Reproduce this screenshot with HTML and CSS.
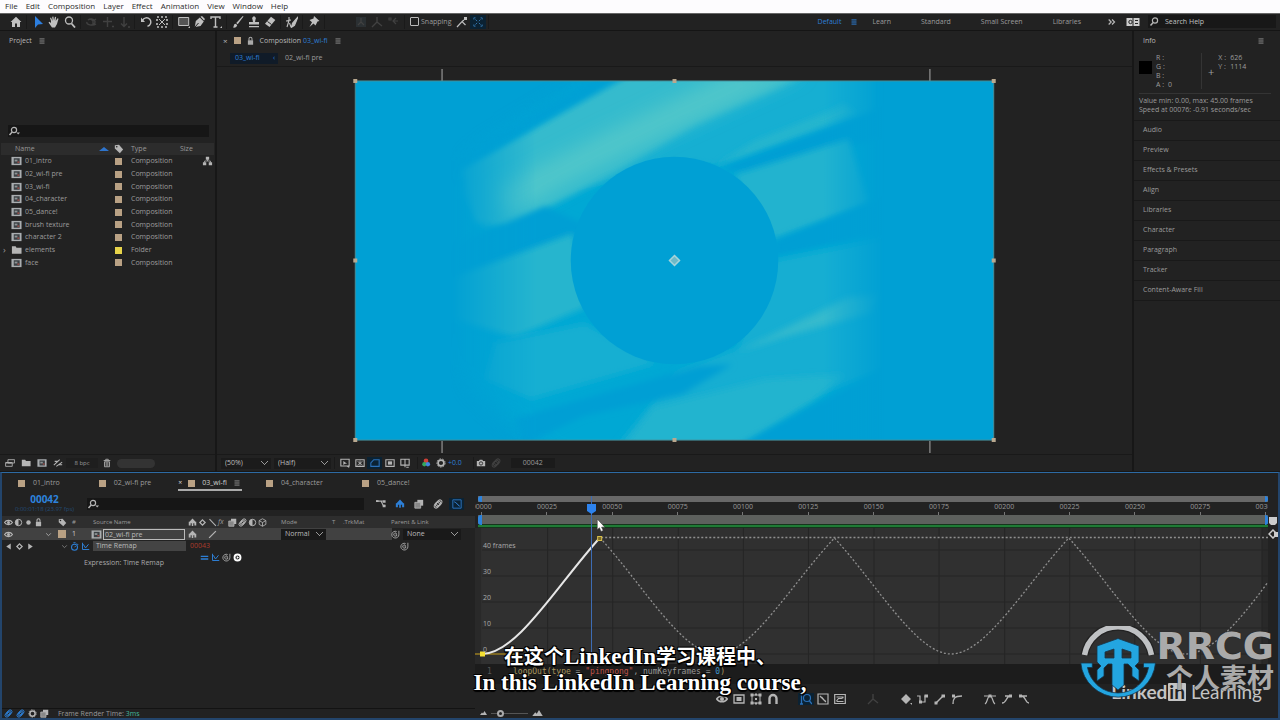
FILE: index.html
```html
<!DOCTYPE html>
<html lang="en">
<head>
<meta charset="utf-8">
<title>Composition 03_wi-fi</title>
<link rel="stylesheet" href="styles.css">
</head>
<body>
<svg class="defs" aria-hidden="true">
  <symbol id="menu" viewBox="0 0 12 12"><path d="M3 3.500h6M3 6h6M3 8.500h6" stroke="currentColor" stroke-width="1.200"/></symbol>
  <symbol id="home" viewBox="0 0 12 12"><path d="M6 .8 0.600 6H2v5h3V7.500h2V11h3V6h1.400z" fill="currentColor"/></symbol>
  <symbol id="arrow" viewBox="0 0 12 12"><path d="M3 0v12l3-3.500 5-.5z" fill="currentColor"/></symbol>
  <symbol id="hand" viewBox="0 0 12 12"><path d="M3 5 2 2l1-.4L4.500 5 4.200.8l1.200-.2L6 4.500 7 .8l1.100.3L7.700 5 9.500 2.200l1 .5L9 8l-2 3.500H4L.5 6.500l1-.8L3 7z" fill="currentColor"/></symbol>
  <symbol id="zoom" viewBox="0 0 12 12"><circle cx="5" cy="4.500" r="3.500" fill="none" stroke="currentColor" stroke-width="1.300"/><path d="m7.500 7.500 3.500 4" stroke="currentColor" stroke-width="1.800"/></symbol>
  <symbol id="orbit" viewBox="0 0 12 12"><path d="M2 4a4 3 0 1 1 3 5M1 6a5 2.500 0 0 0 9 2M5 3l2 2 3-2M7 5v4" fill="none" stroke="currentColor" stroke-width="1.400"/></symbol>
  <symbol id="move" viewBox="0 0 12 12"><path d="M5.500 1v10M1 5.500h9M10 10.500h2" stroke="currentColor" stroke-width="1.400"/></symbol>
  <symbol id="down" viewBox="0 0 12 12"><path d="M6 1v9M3 7.500l3 3 3-3M10 11h2" fill="none" stroke="currentColor" stroke-width="1.400"/></symbol>
  <symbol id="rotate" viewBox="0 0 12 12"><path d="M2.500 4.500a4.300 4.300 0 1 1 5 5.800" fill="none" stroke="currentColor" stroke-width="1.400"/><path d="M1 1.500v4.500h4z" fill="currentColor"/></symbol>
  <symbol id="anchor" viewBox="0 0 12 12"><path d="M1 1h10v10H1z" fill="none" stroke="currentColor" stroke-width="1.600" stroke-dasharray="2 2"/><path d="m3 3 6 6m0-6-6 6" stroke="currentColor"/></symbol>
  <symbol id="rect" viewBox="0 0 12 12"><path d="M.7 1.500h10v8H.7z" fill="#555" stroke="currentColor"/><path d="M10 12h2v-2z" fill="currentColor"/></symbol>
  <symbol id="pen" viewBox="0 0 12 12"><path d="m.8 11 1-6 4-3.500 4 4L6.500 10zM6.500.8 8 0l3 3-1 1.500z" fill="currentColor"/><path d="m1 11 3.500-4" stroke="#222"/></symbol>
  <symbol id="type" viewBox="0 0 12 12"><path d="M1 3V1h9v2M5.500 1v10M3.500 11h4" fill="none" stroke="currentColor" stroke-width="1.400"/><path d="M10 12h2v-2z" fill="currentColor"/></symbol>
  <symbol id="brush" viewBox="0 0 12 12"><path d="m11.500.5-5.800 7.800-1.500-1.200L10.800 0zM1 11.500c1-1 .5-3.300 2.500-3.700L5.200 9C5 11 3 12 1 11.500" fill="currentColor"/></symbol>
  <symbol id="stamp" viewBox="0 0 12 12"><path d="M4.500 3.500a1.800 2 0 1 1 3 0L7 6h4v2.500H1V6h4zM1 10h10v1.300H1z" fill="currentColor"/></symbol>
  <symbol id="eraser" viewBox="0 0 12 12"><path d="M7 .8 11.300 4 5.500 11 1 7.700z" fill="currentColor"/><path d="m3.500 5.500 4 3" stroke="#222"/></symbol>
  <symbol id="roto" viewBox="0 0 12 12"><path d="m12 .8-5.500 6.500-1 4 3-2zM3 1v3.500M0 5l5-1M3 4.500 1 11M3.500 7l1.500 4" stroke="currentColor" stroke-width="1.100" fill="currentColor"/></symbol>
  <symbol id="pin" viewBox="0 0 12 12"><path d="M6 0 11.500 5l-2 .5-2 4-2-2L1.500 11 4 6.200 1.500 4l4-1.500z" fill="currentColor"/></symbol>
  <symbol id="axis" viewBox="0 0 12 12"><path d="M6 6V1M6 6l-5 5M6 6l5 4" fill="none" stroke="currentColor" stroke-width="1.400"/></symbol>
  <symbol id="axisbox" viewBox="0 0 12 12"><path d="M1 1h10v10H1z" fill="#2b3033"/><path d="M6 6V2M6 6l-3 3M6 6l3 3" fill="none" stroke="currentColor" stroke-width="1.200"/></symbol>
  <symbol id="axisview" viewBox="0 0 12 12"><path d="M2 2h2v2H2zM9 2l-3 3 3 3M6 5h5" fill="none" stroke="currentColor" stroke-width="1.200"/></symbol>
  <symbol id="snap" viewBox="0 0 12 12"><path d="M1 11 6 5.500 9.500 9M6 5.500 8 4" fill="none" stroke="currentColor" stroke-width="1.200"/><path d="M8 1h3v3H8z" fill="currentColor"/></symbol>
  <symbol id="corners" viewBox="0 0 12 12"><path d="M1 3V1h2M9 1h2v2M11 9v2H9M3 11H1V9M3 3l2 2m4-2L7 5m2 4L7 7M3 9l2-2" fill="none" stroke="currentColor" stroke-width="1.200"/></symbol>
  <symbol id="more" viewBox="0 0 12 12"><path d="m2 3 3 3-3 3M6 3l3 3-3 3" fill="none" stroke="currentColor" stroke-width="1.500"/></symbol>
  <symbol id="card" viewBox="0 0 14 10"><path d="M.5 1h13v8H.5z" fill="#ccc"/><circle cx="4.500" cy="5" r="1.700" fill="none" stroke="#222"/><path d="M9 3.500h3M9 6.500h3M7 1v8" stroke="#222"/></symbol>
  <symbol id="find" viewBox="0 0 14 12"><circle cx="7" cy="4.500" r="2.600" fill="none" stroke="currentColor" stroke-width="1.200"/><path d="M5.200 6.500 2.500 9.500" stroke="currentColor" stroke-width="1.500"/></symbol>
  <symbol id="findmore" viewBox="0 0 14 12"><circle cx="6" cy="5" r="2.600" fill="none" stroke="currentColor" stroke-width="1.200"/><path d="M4.200 7 1.500 10" stroke="currentColor" stroke-width="1.500"/><path d="M8.500 7.500H12L10.200 9.500z" fill="currentColor"/></symbol>
  <symbol id="comp" viewBox="0 0 12 10"><path d="M.5.500h11v9H.5z" fill="#a9adb0"/><path d="M3 2h6.500v6H3z" fill="#3c4144"/><path d="M4 3.500h3v2H4z" fill="#8e9497"/><path d="M7 5.500h2V7H7z" fill="#a64b45"/></symbol>
  <symbol id="folder" viewBox="0 0 12 10"><path d="M1 1h4l1 1.500h5.500V9H1z" fill="currentColor"/></symbol>
  <symbol id="tag" viewBox="0 0 12 12"><path d="M1 1.500 6 1l5 5.500-4 4.500-6-5.500z" fill="currentColor"/><circle cx="3.300" cy="3.300" r="1" fill="#222"/></symbol>
  <symbol id="tree" viewBox="0 0 12 12"><path d="M4 1h4v3.500H4zM.5 7.500h4V11h-4zM7.500 7.500h4V11h-4z" fill="currentColor"/><path d="M6 4v2M2.500 8V6h7v2" fill="none" stroke="currentColor"/></symbol>
  <symbol id="stack" viewBox="0 0 12 10"><path d="M3.500 1h8v4h-8zM.7 4.500h8V9h-8z" fill="#262626" stroke="currentColor"/><path d="M1 4h7v1.500H1z" fill="currentColor"/></symbol>
  <symbol id="adjust" viewBox="0 0 12 10"><path d="M1 7.500 8 1M4 9l7-5M2 3h4M7 7h4" stroke="currentColor" stroke-width="1.300"/></symbol>
  <symbol id="trash" viewBox="0 0 12 12"><path d="M2 3h8M4.500 3V1.500h3V3M3 4.500h6v6H3zM5 5v5M7 5v5" fill="none" stroke="currentColor"/></symbol>
  <symbol id="view1" viewBox="0 0 12 12"><path d="M1 1.500h10v8H1z" fill="none" stroke="currentColor" stroke-width="1.300"/><path d="M4 3.500v5l2-1.500h2.500zM8 10l3 2V9z" fill="currentColor"/></symbol>
  <symbol id="view2" viewBox="0 0 12 12"><path d="M1 2h10v8H1z" fill="none" stroke="currentColor" stroke-width="1.300"/><path d="m3 4 6 4.500M9 4 3 8.500M6 3v6" stroke="currentColor"/></symbol>
  <symbol id="view3" viewBox="0 0 12 12"><path d="M1 10V6l3.500-4H11v8z" fill="none" stroke="currentColor" stroke-width="1.300"/></symbol>
  <symbol id="view4" viewBox="0 0 12 12"><path d="M1 2h10v8H1z" fill="none" stroke="currentColor" stroke-width="1.300"/><path d="M3.500 4h5v4h-5z" fill="currentColor"/></symbol>
  <symbol id="view5" viewBox="0 0 12 12"><path d="M1 1.500h10v7H1zM6 1.500V11M7.500 11h3" fill="none" stroke="currentColor" stroke-width="1.300"/></symbol>
  <symbol id="rgb" viewBox="0 0 12 12"><circle cx="6" cy="3.500" r="2.800" fill="#cf4038"/><circle cx="4" cy="7.500" r="2.600" fill="#36a65c"/><circle cx="8.300" cy="7.500" r="2.600" fill="#4385e0"/></symbol>
  <symbol id="aperture" viewBox="0 0 12 12"><circle cx="6" cy="6" r="3.500" fill="none" stroke="currentColor" stroke-width="2"/><circle cx="6" cy="6" r="5" fill="none" stroke="currentColor" stroke-dasharray="2 1.500"/></symbol>
  <symbol id="camera" viewBox="0 0 12 12"><path d="M1 3.500h2.500L4.500 2h3l1 1.500H11V10H1z" fill="currentColor"/><circle cx="6" cy="6.500" r="2" fill="none" stroke="#222"/></symbol>
  <symbol id="flow" viewBox="0 0 12 12"><path d="M0 2.500h4M4 2.500h4M6 2.500l2.500 5M8 7.500h3" fill="none" stroke="currentColor" stroke-width="1.300"/><path d="M0 1.500h3v2H0zM8 1.500h3.500v3H8zM8 7h3.500v3H8z" fill="currentColor"/></symbol>
  <symbol id="shy" viewBox="0 0 12 12"><path d="M6 0.500 11 6H1zM1 5h10v2H1zM1 7h2.500v3H1zM5 7h2v3.500H5zM8.500 7H11v3H8.500z" fill="currentColor"/></symbol>
  <symbol id="blend" viewBox="0 0 12 12"><path d="M4 1h7v7H4z" fill="currentColor"/><path d="M1 4h7v7H1z" fill="#888" stroke="currentColor"/></symbol>
  <symbol id="blur" viewBox="0 0 12 12"><g fill="none" stroke="currentColor" stroke-width="1.200"><ellipse cx="7.500" cy="4.500" rx="2.600" ry="3.700" transform="rotate(40 7.500 4.500)"/><ellipse cx="6" cy="6" rx="2.600" ry="3.700" transform="rotate(40 6 6)"/><ellipse cx="4.500" cy="7.500" rx="2.600" ry="3.700" transform="rotate(40 4.500 7.500)"/></g></symbol>
  <symbol id="graph" viewBox="0 0 12 12"><path d="M1 1h10v10H1zM3 4c3-1 3 4 6 4M3 3l6 6" fill="none" stroke="currentColor" stroke-width="1.200"/></symbol>
  <symbol id="eye" viewBox="0 0 12 12"><path d="M.7 6C3 2.300 9 2.300 11.300 6 9 9.700 3 9.700.7 6z" fill="none" stroke="currentColor" stroke-width="1.500"/><circle cx="6" cy="6" r="2" fill="currentColor"/></symbol>
  <symbol id="half" viewBox="0 0 12 12"><circle cx="6" cy="6" r="4.300" fill="none" stroke="currentColor" stroke-width="1.300"/><path d="M6 1.700a4.300 4.300 0 0 0 0 8.600z" fill="currentColor"/></symbol>
  <symbol id="dot" viewBox="0 0 12 12"><circle cx="6" cy="6" r="3" fill="currentColor"/></symbol>
  <symbol id="lock" viewBox="0 0 12 12"><path d="M2.500 5h7v6h-7z" fill="currentColor"/><path d="M4 5V3a2 2 0 0 1 4 0v2" fill="none" stroke="currentColor" stroke-width="1.400"/></symbol>
  <symbol id="diamond" viewBox="0 0 12 12"><path d="M6 2.500 9.500 6 6 9.500 2.500 6z" fill="none" stroke="currentColor" stroke-width="1.700"/></symbol>
  <symbol id="slash" viewBox="0 0 12 12"><path d="m2 1.500 8.500 9" stroke="currentColor" stroke-width="1.400"/></symbol>
  <symbol id="line" viewBox="0 0 12 12"><path d="M1.500 10.500 10.500 1.500" stroke="currentColor" stroke-width="1.600"/></symbol>
  <symbol id="cube" viewBox="0 0 12 12"><path d="m6 1 4.500 2.500v5L6 11 1.500 8.500v-5zM1.500 3.500 6 6l4.500-2.500M6 6v5" fill="none" stroke="currentColor" stroke-width="1.100"/></symbol>
  <symbol id="spiral" viewBox="0 0 12 12"><path d="M10.500 1v5.500a4.700 4.500 0 1 1-3-4.500M8 6.500a2.200 2.200 0 1 1-1-2.300V7" fill="none" stroke="currentColor" stroke-width="1.100"/></symbol>
  <symbol id="chev" viewBox="0 0 12 12"><path d="m2 4 4 4 4-4" fill="none" stroke="currentColor" stroke-width="1.400"/></symbol>
  <symbol id="watch" viewBox="0 0 12 12"><circle cx="6" cy="7" r="4" fill="none" stroke="currentColor" stroke-width="1.400"/><path d="M6 7 8 5M4.500 1h3M9 2l2 2" stroke="currentColor" stroke-width="1.300"/></symbol>
  <symbol id="chart" viewBox="0 0 12 12"><path d="M2 1v9h9M3 3l3 5 4-5" fill="none" stroke="currentColor" stroke-width="1.300"/></symbol>
  <symbol id="equals" viewBox="0 0 12 12"><path d="M1 4.500h10M1 8h10" stroke="currentColor" stroke-width="1.700"/></symbol>
  <symbol id="play" viewBox="0 0 12 12"><circle cx="6" cy="6" r="4" fill="none" stroke="currentColor" stroke-width="2.500"/><path d="m5 4 3 2-3 2z" fill="currentColor"/></symbol>
  <symbol id="left" viewBox="0 0 12 12"><path d="M9 2v8L3 6z" fill="currentColor"/></symbol>
  <symbol id="right" viewBox="0 0 12 12"><path d="M3 2v8l6-4z" fill="currentColor"/></symbol>
  <symbol id="transform" viewBox="0 0 12 12"><path d="M2 2h8v8H2z" fill="none" stroke="currentColor" stroke-width="1"/><path d="M.5.500h3v3h-3zM8.500.500h3v3h-3zM.5 8.500h3v3h-3zM8.500 8.500h3v3h-3zM5 5h2v2H5zM5 .5h2v2H5zM5 9.500h2v2H5z" fill="currentColor"/></symbol>
  <symbol id="magnet" viewBox="0 0 12 12"><path d="M2.500 11V5.500a3.500 3.500 0 0 1 7 0V11" fill="none" stroke="currentColor" stroke-width="2.400"/></symbol>
  <symbol id="autozoom" viewBox="0 0 12 12"><circle cx="7" cy="5" r="3.500" fill="none" stroke="currentColor" stroke-width="1.200"/><path d="m9.500 8 2.500 3M1.500 1v10M0 1h3M0 11h3" stroke="currentColor" stroke-width="1.300"/></symbol>
  <symbol id="fitall" viewBox="0 0 12 12"><path d="M.7 1.500h10.600v9H.7zM2.500 8l2-2.500h3l2-1M2.500 4h7M2.500 8.500h7" fill="none" stroke="currentColor" stroke-width="1.200"/></symbol>
  <symbol id="key" viewBox="0 0 12 12"><path d="m6 1 5 5-5 5-5-5zM10 10h2v2z" fill="currentColor"/></symbol>
  <symbol id="hold" viewBox="0 0 12 12"><path d="M0 3h3v6h5V3h3" fill="none" stroke="currentColor" stroke-width="1.200"/><path d="M2 7.500h3v3H2zM7.500 1.500h3.500v3H7.500z" fill="currentColor"/></symbol>
  <symbol id="linear" viewBox="0 0 12 12"><path d="m2 10 7-7" stroke="currentColor" stroke-width="1.500"/><path d="M.5 8.500h3v3h-3zM7.500 1.500h3.500v3H7.500z" fill="currentColor"/></symbol>
  <symbol id="auto" viewBox="0 0 12 12"><path d="M2 11c0-5 1-8 9-8" fill="none" stroke="currentColor" stroke-width="1.400"/><path d="M1 1.500h3v3H1z" fill="currentColor"/></symbol>
  <symbol id="easy" viewBox="0 0 12 12"><path d="M1 11C4 9 3 3 6 3s2 6 5 8M0 3h12" fill="none" stroke="currentColor" stroke-width="1.200"/><path d="M4.500 1.500h3v3h-3z" fill="currentColor"/></symbol>
  <symbol id="easein" viewBox="0 0 12 12"><path d="M1 10c5 0 4-7 8-7M4 3h7" fill="none" stroke="currentColor" stroke-width="1.300"/><path d="M8 1.500h3v3H8z" fill="currentColor"/></symbol>
  <symbol id="easeout" viewBox="0 0 12 12"><path d="M3 3c5 0 4 7 8 7M1 3h8" fill="none" stroke="currentColor" stroke-width="1.300"/><path d="M1 1.500h3v3H1z" fill="currentColor"/></symbol>
  <symbol id="mount" viewBox="0 0 14 8"><path d="M0 8 4 3l2 2 3-5 5 8z" fill="currentColor"/></symbol>
</svg>

<nav class="menubar">
  <button>File</button><button>Edit</button><button>Composition</button><button>Layer</button><button>Effect</button><button>Animation</button><button>View</button><button>Window</button><button>Help</button>
</nav>

<header class="toolbar">
  <div class="tools"><button aria-label="Home"><svg><use href="#home"/></svg></button></div>
  <div class="tools"><button class="blue" aria-label="Selection"><svg><use href="#arrow"/></svg></button><button aria-label="Hand"><svg><use href="#hand"/></svg></button><button aria-label="Zoom"><svg><use href="#zoom"/></svg></button></div>
  <div class="tools off"><button aria-label="Orbit"><svg><use href="#orbit"/></svg></button><button aria-label="Pan"><svg><use href="#move"/></svg></button><button aria-label="Dolly"><svg><use href="#down"/></svg></button></div>
  <div class="tools"><button aria-label="Rotate"><svg><use href="#rotate"/></svg></button><button aria-label="Anchor"><svg><use href="#anchor"/></svg></button></div>
  <div class="tools"><button aria-label="Rectangle"><svg><use href="#rect"/></svg></button><button aria-label="Pen"><svg><use href="#pen"/></svg></button><button aria-label="Type"><svg><use href="#type"/></svg></button></div>
  <div class="tools"><button aria-label="Brush"><svg><use href="#brush"/></svg></button><button aria-label="Clone"><svg><use href="#stamp"/></svg></button><button aria-label="Eraser"><svg><use href="#eraser"/></svg></button></div>
  <div class="tools"><button aria-label="Roto brush"><svg><use href="#roto"/></svg></button></div>
  <div class="tools"><button aria-label="Puppet pin"><svg><use href="#pin"/></svg></button></div>
  <div class="tools off axes"><button aria-label="Local axis"><svg><use href="#axisbox"/></svg></button><button aria-label="World axis"><svg><use href="#axis"/></svg></button><button aria-label="View axis"><svg><use href="#axisview"/></svg></button></div>
  <label class="snapping"><input type="checkbox">Snapping</label>
  <div class="tools"><button aria-label="Snap edges"><svg><use href="#snap"/></svg></button><button class="lit" aria-label="Snap collapsed"><svg><use href="#corners"/></svg></button></div>
  <div class="spaces"><button class="blue">Default</button><svg class="blue burger"><use href="#menu"/></svg><button>Learn</button><button>Standard</button><button>Small Screen</button><button>Libraries</button></div>
  <button class="icon" aria-label="More workspaces"><svg><use href="#more"/></svg></button>
  <svg class="card"><use href="#card"/></svg>
  <label class="help"><svg><use href="#find"/></svg><input type="text" value="Search Help" aria-label="Search help"></label>
</header>

<main class="work">
  <section class="panel project">
    <h2>Project <svg><use href="#menu"/></svg></h2>
    <label class="search"><svg><use href="#findmore"/></svg><input type="text" aria-label="Search project"></label>
    <table>
      <thead><tr><th></th><th></th><th>Name</th><th><i class="sort"></i></th><th><svg class="tagicon"><use href="#tag"/></svg></th><th>Type</th><th>Size</th></tr></thead>
      <tbody>
        <tr><td></td><td><svg><use href="#comp"/></svg></td><td colspan="2">01_intro</td><td><i class="chip"></i></td><td>Composition</td><td class="net"><svg><use href="#tree"/></svg></td></tr>
        <tr><td></td><td><svg><use href="#comp"/></svg></td><td colspan="2">02_wi-fi pre</td><td><i class="chip"></i></td><td>Composition</td><td></td></tr>
        <tr><td></td><td><svg><use href="#comp"/></svg></td><td colspan="2">03_wi-fi</td><td><i class="chip"></i></td><td>Composition</td><td></td></tr>
        <tr><td></td><td><svg><use href="#comp"/></svg></td><td colspan="2">04_character</td><td><i class="chip"></i></td><td>Composition</td><td></td></tr>
        <tr><td></td><td><svg><use href="#comp"/></svg></td><td colspan="2">05_dance!</td><td><i class="chip"></i></td><td>Composition</td><td></td></tr>
        <tr><td></td><td><svg><use href="#comp"/></svg></td><td colspan="2">brush texture</td><td><i class="chip"></i></td><td>Composition</td><td></td></tr>
        <tr><td></td><td><svg><use href="#comp"/></svg></td><td colspan="2">character 2</td><td><i class="chip"></i></td><td>Composition</td><td></td></tr>
        <tr><td class="open">›</td><td><svg><use href="#folder"/></svg></td><td colspan="2">elements</td><td><i class="chip yellow"></i></td><td>Folder</td><td></td></tr>
        <tr><td></td><td><svg><use href="#comp"/></svg></td><td colspan="2">face</td><td><i class="chip"></i></td><td>Composition</td><td></td></tr>
      </tbody>
    </table>
    <footer>
      <button class="icon" aria-label="Interpret footage"><svg><use href="#stack"/></svg></button><button class="icon" aria-label="New folder"><svg><use href="#folder"/></svg></button><button class="icon" aria-label="New composition"><svg><use href="#comp"/></svg></button><button class="icon" aria-label="Project settings"><svg><use href="#adjust"/></svg></button><button class="bpc">8 bpc</button><button class="icon" aria-label="Delete"><svg><use href="#trash"/></svg></button><i class="pill"></i>
    </footer>
  </section>

  <section class="panel viewer">
    <h2><span class="close">×</span><i class="chip"></i><svg class="pad"><use href="#lock"/></svg>Composition <b>03_wi-fi</b> <svg><use href="#menu"/></svg></h2>
    <div class="crumbs"><button class="on">03_wi-fi <span>‹</span></button><button>02_wi-fi pre</button></div>
    <div class="stage">
      <svg viewBox="0 0 914 388" role="img" aria-label="Composition preview">
        <defs>
          <linearGradient id="fade" gradientUnits="userSpaceOnUse" x1="95" x2="530" y1="0" y2="0"><stop offset="0" stop-color="#fff" stop-opacity="0"/><stop offset=".2" stop-color="#fff"/><stop offset=".86" stop-color="#fff"/><stop offset="1" stop-color="#fff" stop-opacity="0"/></linearGradient>
          <mask id="soft"><path fill="url(#fade)" d="M0 0h640v360H0z"/></mask>
          <filter id="b1" x="-20%" y="-20%" width="140%" height="140%"><feGaussianBlur stdDeviation="3"/></filter>
          <filter id="b2" x="-20%" y="-20%" width="140%" height="140%"><feGaussianBlur stdDeviation="9"/></filter>
          <clipPath id="frame"><path d="M0 0h640v360H0z"/></clipPath>
        </defs>
        <path d="M87 2v12M576 2v12M87 375v12M576 375v12" transform="translate(137 0)" stroke="#7e7e7e" stroke-width="1.500"/>
        <g transform="translate(137 14)">
          <path d="M0 0h640v360H0z" fill="#00a0d4"/>
          <g clip-path="url(#frame)"><g mask="url(#soft)">
            <path filter="url(#b2)" fill="#04a8d4" d="M60 105 270-20h270v390l-190 10H200L90 290z"/>
            <path filter="url(#b1)" fill="#12afd2" d="M155 62 275-15h245v49L362 85 340 82 225 107 130 150 105 110z"/>
            <path filter="url(#b1)" fill="#36bbcd" d="M105 86 162 58 285-14h185L340 44l-80 48-106 55-34-6z"/>
            <path filter="url(#b2)" fill="#50c6ca" d="M140 108 250 52 380-10h70L320 50 210 104l-60 35z"/>
            <path filter="url(#b1)" fill="#00a0d4" d="M162 56 278-8h-30L90 80v18z"/>
            <path filter="url(#b1)" fill="#28b6ce" d="M360 86 400 61l70-28 20-10 12 9z"/>
            <path filter="url(#b1)" fill="#009fd4" d="M365 88 540 22v32l-150 38z"/>
            <path filter="url(#b1)" fill="#22b3cf" d="m380 94 115-36 20 65-95 36z"/>
            <path filter="url(#b1)" fill="#009fd4" d="M420 160 540 112v38l-120 26zM80 172l110-46 45 20-10 8-130 46z"/>
            <path filter="url(#b1)" fill="#28b5ce" d="m100 196 118-43 12 74-70 30-60-18z"/>
            <path filter="url(#b1)" fill="#12aed2" d="m420 180 110-22v130l-142 58-130 25 65-80 60-23z"/>
            <path filter="url(#b1)" fill="#14afd2" d="m140 262 90-19 72 40-126 36-46-20z"/>
            <path filter="url(#b1)" fill="#34bacd" d="M382 272 494 217l32-3-8 18-90 25z"/>
            <path filter="url(#b1)" fill="#009fd4" d="m160 338 184-52 34-2-50 30-100 22-60 30z"/>
            <path filter="url(#b1)" fill="#23b4cf" d="m255 385 44-58 112-28 80-5-32 27-100 64z"/>
            <path filter="url(#b1)" fill="#009fd4" d="M465 322 540 284v100H350z"/>
          </g></g>
          <circle cx="320" cy="180" r="104" fill="#00a0d4"/>
          <path d="M0 0h640v360H0z" fill="none" stroke="#46909c"/>
          <path d="m320 175 5 5-5 5-5-5z" fill="#6db9c8" stroke="#a5d4da" stroke-width="1.500"/>
          <path fill="#b9a88f" d="M-2-2h4v4h-4zM318-2h4v4h-4zM638-2h4v4h-4zM-2 178h4v4h-4zM638 178h4v4h-4zM-2 358h4v4h-4zM318 358h4v4h-4zM638 358h4v4h-4z"/>
        </g>
      </svg>
    </div>
    <footer>
      <select aria-label="Magnification"><option>(50%)</option></select>
      <select class="res" aria-label="Resolution"><option>(Half)</option></select>
      <div class="set"><button class="icon" aria-label="Fast preview"><svg><use href="#view1"/></svg></button><button class="icon" aria-label="Transparency"><svg><use href="#view2"/></svg></button><button class="icon lit" aria-label="Mask"><svg><use href="#view3"/></svg></button><button class="icon" aria-label="Region"><svg><use href="#view4"/></svg></button><button class="icon" aria-label="Guides"><svg><use href="#view5"/></svg></button></div>
      <div class="set"><button class="icon" aria-label="Channels"><svg><use href="#rgb"/></svg></button><button class="icon" aria-label="Exposure"><svg><use href="#aperture"/></svg></button><span class="blue">+0.0</span></div>
      <div class="set snapshots"><button class="icon" aria-label="Snapshot"><svg><use href="#camera"/></svg></button><button class="icon off" aria-label="Show snapshot"><svg><use href="#blur"/></svg></button></div>
      <span class="frameno">00042</span>
    </footer>
  </section>

  <aside class="panel side">
    <h2>Info <svg><use href="#menu"/></svg></h2>
    <div class="info">
      <i class="swatch"></i>
      <dl class="rgba"><dt>R :</dt><dd></dd><dt>G :</dt><dd></dd><dt>B :</dt><dd></dd><dt>A :</dt><dd>0</dd></dl>
      <span class="plus">+</span>
      <dl class="xy"><dt>X :</dt><dd>626</dd><dt>Y :</dt><dd>1114</dd></dl>
    </div>
    <p>Value min: 0.00, max: 45.00 frames<br>Speed at 00076: -0.91 seconds/sec</p>
    <div class="stackpanels"><button>Audio</button><button>Preview</button><button>Effects &amp; Presets</button><button>Align</button><button>Libraries</button><button>Character</button><button>Paragraph</button><button>Tracker</button><button>Content-Aware Fill</button></div>
  </aside>
</main>

<section class="timeline">
  <nav class="tabs">
    <button><i class="chip"></i>01_intro</button><button><i class="chip"></i>02_wi-fi pre</button><button class="on"><span>×</span><i class="chip"></i>03_wi-fi <svg><use href="#menu"/></svg></button><button><i class="chip"></i>04_character</button><button><i class="chip"></i>05_dance!</button>
  </nav>
  <div class="split">
    <div class="layers">
      <div class="head">
        <div class="time"><strong>00042</strong><small>0:00:01:18 (23.97 fps)</small></div>
        <label class="search"><svg><use href="#findmore"/></svg><input type="text" aria-label="Search layers"></label>
        <div class="switches"><button class="icon" aria-label="Flowchart"><svg><use href="#flow"/></svg></button><button class="icon blue" aria-label="Hide shy"><svg><use href="#shy"/></svg></button><button class="icon" aria-label="Frame blending"><svg><use href="#blend"/></svg></button><button class="icon" aria-label="Motion blur"><svg><use href="#blur"/></svg></button><button class="icon lit2" aria-label="Graph editor"><svg><use href="#graph"/></svg></button></div>
      </div>
      <div class="row cols">
        <span class="av"><svg><use href="#eye"/></svg><svg><use href="#half"/></svg><svg><use href="#dot"/></svg><svg><use href="#lock"/></svg></span>
        <span></span><span><svg><use href="#tag"/></svg></span><span>#</span><span class="sn">Source Name</span>
        <span class="sw"><svg><use href="#shy"/></svg><svg><use href="#diamond"/></svg><svg><use href="#slash"/></svg><em>fx</em><svg><use href="#blend"/></svg><svg><use href="#blur"/></svg><svg><use href="#half"/></svg><svg><use href="#cube"/></svg></span>
        <span>Mode</span><span>T</span><span>.TrkMat</span><span>Parent &amp; Link</span>
      </div>
      <div class="row layer">
        <span class="av"><svg><use href="#eye"/></svg></span>
        <span><svg class="tiny"><use href="#chev"/></svg></span><span><i class="chip"></i></span><span>1</span><span class="src"><svg><use href="#comp"/></svg><b>02_wi-fi pre</b></span>
        <span class="sw"><svg><use href="#shy"/></svg><i></i><svg><use href="#line"/></svg></span>
        <span><select aria-label="Blend mode"><option>Normal</option></select></span><span></span><span></span>
        <span class="parent"><svg><use href="#spiral"/></svg><select aria-label="Parent"><option>None</option></select></span>
      </div>
      <div class="row prop">
        <span class="nav3"><svg><use href="#left"/></svg><svg><use href="#diamond"/></svg><svg><use href="#right"/></svg></span>
        <span class="blue"><svg class="tiny gray"><use href="#chev"/></svg><svg><use href="#watch"/></svg><svg><use href="#chart"/></svg></span>
        <span class="pname">Time Remap</span><span class="red">00043</span><span class="whip"><svg><use href="#spiral"/></svg></span>
      </div>
      <div class="row expricons"><svg class="blue"><use href="#equals"/></svg><svg class="blue"><use href="#chart"/></svg><svg><use href="#spiral"/></svg><svg class="white"><use href="#play"/></svg></div>
      <div class="expr">Expression: Time Remap</div>
      <footer class="status">
        <svg class="blue"><use href="#blur"/></svg><svg class="blue"><use href="#blur"/></svg><svg><use href="#aperture"/></svg><svg><use href="#blend"/></svg><span>Frame Render Time: <b>3ms</b></span>
      </footer>
    </div>
    <div class="graphside">
      <div class="navbar"><i></i><i></i></div>
      <div class="ruler"><div><span>00000</span><span>00025</span><span>00050</span><span>00075</span><span>00100</span><span>00125</span><span>00150</span><span>00175</span><span>00200</span><span>00225</span><span>00250</span><span>00275</span><span>00300</span></div></div>
      <div class="area"><i></i><i></i></div>
      <div class="plot">
        <svg viewBox="0 0 792 136" preserveAspectRatio="none">
          <path d="M6 0h780v136H6z" fill="#303030"/>
          <path d="M7 22h785M7 48h785M7 74h785M7 100h785M7 126h785M72.500 0v136M137.500 0v136M203 0v136M268 0v136M333 0v136M398.500 0v136M463.500 0v136M529 0v136M594 0v136M659 0v136M724.500 0v136M786 0v136" stroke="#252525" stroke-width="1"/>
          <g fill="none" stroke="#8f8f8f" stroke-width="1.300" stroke-dasharray="2 2"><path d="M126 9.500h666"/><path d="M125 10C168 57 207 126 241.500 126S315 57 359 10C402 57 441 126 475.500 126S550 57 593 10C636 57 675 126 709.500 126c25 0 52-30 82.500-72"/></g>
          <path d="M0 126h40" stroke="#997c20" stroke-width="1.300"/>
          <path d="M7 126C42 126 82 57 124.500 10" fill="none" stroke="#e6e6e6" stroke-width="2"/>
          <path d="M5 123.500h5v5H5z" fill="#f4df32"/><path d="M122.500 8.500h4v4h-4z" fill="#7c6b2a" stroke="#d7bf49"/>
        </svg>
        <div class="scale"><span>40 frames</span><span>30</span><span>20</span><span>10</span><span>0</span></div>
      </div>
      <code class="editor"><span class="ln">1</span><span class="y">loopOut(type</span> = <span class="r">"pingpong"</span>, numKeyframes = <span class="b">0</span><span class="y">)</span></code>
      <div class="graphtools">
        <div><button class="icon" aria-label="Show properties"><svg><use href="#eye"/></svg></button><button class="icon" aria-label="Graph type"><svg><use href="#view4"/></svg></button><button class="icon" aria-label="Transform box"><svg><use href="#transform"/></svg></button><button class="icon" aria-label="Snap"><svg><use href="#magnet"/></svg></button></div>
        <div><button class="icon lit" aria-label="Auto zoom"><svg><use href="#autozoom"/></svg></button><button class="icon" aria-label="Fit selection"><svg><use href="#graph"/></svg></button><button class="icon" aria-label="Fit all"><svg><use href="#fitall"/></svg></button></div>
        <div><button class="icon off" aria-label="Separate dimensions"><svg><use href="#axis"/></svg></button></div>
        <div><button class="icon" aria-label="Edit keyframes"><svg><use href="#key"/></svg></button><button class="icon" aria-label="Hold"><svg><use href="#hold"/></svg></button><button class="icon" aria-label="Linear"><svg><use href="#linear"/></svg></button><button class="icon" aria-label="Auto bezier"><svg><use href="#auto"/></svg></button></div>
        <div><button class="icon" aria-label="Easy ease"><svg><use href="#easy"/></svg></button><button class="icon" aria-label="Easy ease in"><svg><use href="#easein"/></svg></button><button class="icon" aria-label="Easy ease out"><svg><use href="#easeout"/></svg></button></div>
      </div>
      <div class="zoomer"><svg class="small"><use href="#mount"/></svg><input type="range" min="0" max="100" value="20" aria-label="Timeline zoom"><svg><use href="#mount"/></svg></div>
      <div class="playhead"></div>
    </div>
    <div class="edge"><svg viewBox="0 0 10 10"><path d="M1 1h8v6L7 9H3L1 7z" fill="#ccc"/></svg><svg viewBox="0 0 10 10"><path d="M5 1 9 5 5 9 1 5z" fill="none" stroke="#ccc" stroke-width="1.500"/><path d="M6 3h4v5H6z" fill="#ccc"/></svg></div>
  </div>
</section>

<svg class="cursor" viewBox="0 0 8 12"><path d="M1 0v10l2-2 1.500 3.500 2-1L5 7.500h3z" fill="#fff" stroke="#333" stroke-width=".5"/></svg>
<div class="subs"><p lang="zh">在这个<span lang="en">LinkedIn</span>学习课程中、</p><p lang="en">In this LinkedIn Learning course,</p></div>
<div class="lil">Linked<span>in</span><em>Learning</em></div>
<div class="brand">
  <svg viewBox="0 0 76 76" aria-hidden="true">
    <path d="M4.500 29a34 34 0 0 1 67 0" fill="none" stroke="#222" stroke-width="8"/>
    <path d="M4.500 29a34 34 0 0 1 67 0" fill="none" stroke="#bfc1c3" stroke-width="5.500"/>
    <path d="M.8 37h11.500v4.500H7.500a31 31 0 0 0 61 0h-5V37h12a37.500 37.500 0 0 1-74.700 0z" fill="#23a5e0" stroke="#15354a" stroke-width=".8"/>
    <path d="M38 12.500 59 20v16l-4 4 4 4v11l-7-5v-8l-4-4h-4v21l-6 5-6-5V38h-4l-4 4v8l-7 5V44l4-4-4-4V20zM34 23l-9 3v6h9zM42 23v9h9v-6z" fill="#23a5e0" stroke="#15354a" stroke-width=".8" fill-rule="evenodd"/>
  </svg>
  <div><strong>RRCG</strong><span lang="zh">个人素材</span></div>
</div>
</body>
</html>
```

FILE: styles.css
```css
* { box-sizing: border-box; }
html, body { height: 100%; }
body {
  margin: 0; display: flex; flex-direction: column; position: relative; overflow: hidden;
  background: #171717; color: #9c9c9c;
  font: 7px/10px "Open Sans", "Noto Sans", sans-serif;
}
button, input, select { font: inherit; color: inherit; background: none; border: 0; margin: 0; padding: 0; border-radius: 0; }
button { white-space: nowrap; }
svg { display: block; flex: none; width: 10px; height: 10px; color: #b5b5b5; }
h2, p, dl, dd { margin: 0; }
h2 { font-weight: 400; }
.defs { position: absolute; width: 0; height: 0; }
.blue, .blue svg { color: #2d7fd6; }
.off svg { color: #424242; }
.lit, .lit2 { background: #0b2233; }
.lit svg, .lit2 svg { color: #2b70b8; }
.icon { display: grid; place-items: center; width: 15px; height: 12px; }
.chip { display: block; flex: none; width: 7px; height: 7px; background: #b9a184; }
.chip.yellow { background: #e8d44a; }

.menubar { display: flex; gap: 8px; height: 14px; padding: 0 5px; background: #fdfcfe; color: #2c2c2c; border-bottom: 1px solid #666; }
.menubar button { font-size: 8px; line-height: 12px; font-family: "Open Sans", sans-serif; }

.toolbar { display: flex; align-items: center; height: 17px; padding: 0 4px 0 8px; background: #222; border-bottom: 1px solid #151515; }
.tools { display: flex; padding-right: 2px; margin-right: 3px; border-right: 1px solid #1a1a1a; }
.tools button { width: 16px; display: grid; place-items: center; height: 14px; }
.tools svg { width: 12px; height: 12px; }
.tools svg, .card { color: #c0c0c0; }
.tools .blue svg { color: #2d7fe0; }
.tools.off svg, .off svg { color: #414141; }
.tools .lit svg { color: #3272a8; width: 10px; }
.axes { padding-left: 25px; padding-right: 3px; }
.snapping { display: flex; align-items: center; gap: 2px; padding: 0 3px 0 2px; }
.snapping input { appearance: none; width: 9px; height: 9px; border: 1px solid #bbb; border-radius: 1px; }
.spaces { display: flex; align-items: center; gap: 30px; margin-left: auto; margin-right: 23px; }
.spaces .burger { margin: 0 -17px 0 -22px; }
.spaces button { font-size: 7px; }
.card { width: 14px; height: 10px; margin: 0 8px 0 7px; }
.help { display: flex; align-items: center; width: 128px; height: 13px; background: #181818; color: #c0c0c0; }
.help svg, .search svg { width: 14px; height: 12px; }
.help input { flex: 1; min-width: 0; padding-left: 3px; }

.work { flex: 1 1 441px; min-height: 0; display: grid; grid-template-columns: 215px minmax(0, 1fr) 146px; gap: 2px; }
.panel { background: #222; display: flex; flex-direction: column; min-height: 0; }
.panel h2 { display: flex; align-items: center; gap: 5px; height: 20px; padding: 0 9px; font-size: 7px; color: #b8b8b8; flex: none; }
.panel h2 svg { color: #888; }
.panel footer { margin-top: auto; display: flex; align-items: center; height: 17px; border-top: 1px solid #191919; flex: none; }

.search { display: flex; align-items: center; background: #161616; height: 12px; }
.search input { flex: 1; min-width: 0; height: 12px; }
.project .search { margin: 74px 6px 6px 8px; flex: none; }
table { border-collapse: collapse; table-layout: fixed; width: 213px; margin-left: 1px; }
th, td { padding: 0; text-align: left; font-weight: 400; height: 12px; line-height: 10px; white-space: nowrap; }
thead { background: #2c2c2c; color: #999; }
th:nth-child(1) { width: 10px; } th:nth-child(2) { width: 14px; } th:nth-child(3) { width: 74px; text-indent: -10px; }
th:nth-child(4) { width: 15px; } th:nth-child(5) { width: 17px; } th:nth-child(6) { width: 49px; }
.sort { display: block; border: 5px solid transparent; border-top: 0; border-bottom: 4px solid #2e74cc; width: 0; }
tbody td { height: 13px; }
tbody tr:nth-child(3n) td { height: 12px; }
td svg { width: 11px; height: 10px; }
td .chip { margin-left: 1px; }
.open { font-size: 9px; padding-left: 2px; }
.net svg { margin-left: 22px; }
.project footer { padding-left: 2px; gap: 1px; }
.bpc { width: 32px; background: #1e1e1e; color: #999; font-size: 6px; }
.pill { width: 38px; height: 9px; margin-left: 2px; border-radius: 5px; background: #333; }

.viewer .close { font-size: 8px; margin-right: 1px; }
.viewer h2 { padding-left: 6px; }
.viewer h2 svg.pad { color: #aaa; width: 9px; }
.viewer h2 b { font-weight: 400; color: #2d7fd6; margin-left: -3px; }
.crumbs { display: flex; height: 16px; align-items: center; padding-left: 13px; gap: 7px; border-bottom: 1px solid #191919; flex: none; }
.crumbs .on { background: #101b28; color: #2d7fd6; width: 48px; height: 11px; display: flex; align-items: center; justify-content: space-between; padding: 0 3px 0 5px; }
.stage { flex: 1; min-height: 0; }
.stage svg { width: 100%; height: 100%; }
select { appearance: none; padding: 0 12px 0 4px; height: 11px; background: linear-gradient(45deg, transparent 45%, #999 45% 60%, transparent 60%) right 6px center/4px 4px no-repeat, linear-gradient(-45deg, transparent 45%, #999 45% 60%, transparent 60%) right 3px center/4px 4px no-repeat, #1b1b1b; color: #bbb; }
.viewer footer { gap: 3px; padding-left: 4px; }
.viewer footer select { width: 50px; }
.viewer footer .res { width: 57px; }
.set { display: flex; align-items: center; padding: 0 2px; border-left: 1px solid #1a1a1a; }
.set + .set { padding-left: 0; }
.snapshots { margin-left: 6px; }
.frameno { background: #1b1b1b; width: 44px; text-align: center; color: #999; margin-left: 2px; }

.side h2 { justify-content: space-between; padding: 0 14px 0 9px; }
.info { display: flex; margin: 2px 9px 0 5px; padding-bottom: 4px; border-bottom: 1px solid #343434; }
.info dl { display: grid; grid-template-columns: 12px 1fr; line-height: 9px; height: 36px; grid-auto-rows: 9px; }
.swatch { width: 13px; height: 13px; margin: 8px 4px 0 0; background: #000; }
.rgba { width: 45px; }
.plus { border-left: 1px solid #343434; padding: 14px 4px 0 6px; font-size: 11px; line-height: 10px; }
.side p { padding: 2px 5px 6px; line-height: 9px; font-size: 7px; white-space: nowrap; }
.stackpanels { display: flex; flex-direction: column; border-top: 1px solid #191919; }
.stackpanels button { height: 20px; text-align: left; padding-left: 9px; border-bottom: 1px solid #191919; }

.timeline { flex: none; display: flex; flex-direction: column; height: 248px; background: #222; border: 2px solid #23456c; border-top: 1px solid #2d6aa3; margin-top: 1px; }
.tabs { display: flex; height: 18px; gap: 38px; padding: 0 16px; }
.tabs button { display: flex; align-items: center; gap: 8px; height: 18px; padding-top: 2px; margin-right: 1px; }
.tabs .on { gap: 7px; padding-top: 4px; border-bottom: 2px solid #aaa; color: #d0d0d0; margin-left: -12px; margin-right: -14px; }
.tabs .on span { margin-right: -1px; }
.tabs .on svg { color: #888; margin-left: -2px; }
.split { flex: 1; min-height: 0; display: grid; grid-template-columns: 473px minmax(0, 1fr) 10px; }
.layers { display: flex; flex-direction: column; min-width: 0; }
.head { display: flex; height: 25px; align-items: center; }
.time { width: 85px; text-align: center; color: #2d83dd; }
.time strong { display: block; font-size: 10px; line-height: 11px; font-weight: 700; }
.time small { display: block; font-size: 6px; line-height: 8px; color: #234a73; }
.head .search { width: 277px; }
.switches { display: flex; gap: 4px; margin-left: 9px; }
.row { display: grid; align-items: center; height: 12px; grid-template-columns: 43px 13px 14px 19px 97px 93px 51px 11px 48px 1fr; flex: none; }
.row > span { display: flex; align-items: center; white-space: nowrap; }
.row svg { width: 9px; height: 9px; }
.cols { background: #2e2e2e; font-size: 6px; }
.cols .sn { padding-left: 2px; }
.av, .nav3 { padding-left: 2px; gap: 1px; }
.sw { gap: 1px; }
.sw em { width: 9px; font-size: 7px; }
.sw i { width: 9px; }
.layer { background: linear-gradient(#414141, #414141) 0 0/390px 100% no-repeat; color: #ccc; }
.row .tiny { width: 7px; height: 7px; }
.row .gray { color: #888; }
.layer .chip { width: 8px; height: 8px; }
.src { gap: 1px; }
.src svg { width: 11px; }
.src b { font-weight: 400; border: 1px solid #bbb; width: 82px; height: 11px; line-height: 9px; color: #bbb; padding-left: 1px; }
.layer select { height: 11px; background-color: #191919; }
.layer span select { width: 45px; }
.layer .parent { gap: 3px; }
.layer .parent select { width: 58px; }
.prop { grid-template-columns: 59px 32px 97px 208px 1fr; }
.prop > span { gap: 2px; }
.prop .pname { background: #444; width: 93px; height: 10px; padding-left: 3px; color: #bbb; }
.red { color: #ad3b2b; }
.whip { padding-left: 2px; }
.expricons { display: flex; gap: 2px; padding-left: 198px; height: 11px; }
.expricons .white { color: #fff; }
.expr { margin-top: -5px; padding-left: 82px; color: #aaa; }
.status { margin-top: auto; height: 10px; display: flex; align-items: center; gap: 3px; padding-left: 2px; border-top: 1px solid #131313; color: #999; }
.status svg { width: 9px; height: 9px; }
.status span { margin-left: 6px; }
.status b { font-weight: 400; color: #42b69a; }

.graphside { position: relative; display: flex; flex-direction: column; min-width: 0; }
.navbar, .area { display: flex; justify-content: space-between; background: #686868; margin-left: 3px; flex: none; }
.navbar { height: 6px; margin-top: 5px; }
.navbar i, .area i { width: 4px; background: #2d83dd; border-radius: 3px 0 0 3px; }
.navbar i:last-child, .area i:last-child { border-radius: 0 3px 3px 0; width: 3px; }
.area { height: 13px; background: linear-gradient(#5d605d 9px, #15351c 9px 10px, #1f7a35 10px 12px, #15351c 12px); }
.area i { height: 10px; }
.ruler { height: 13px; overflow: hidden; color: #999; flex: none; }
.ruler div { display: flex; width: 107.1%; margin-left: -26px; }
.ruler span { flex: 1 1 0; text-align: center; height: 13px; background: linear-gradient(#777, #777) center bottom/1px 3px no-repeat; }
.plot { position: relative; height: 136px; flex: none; background: #292929; }
.plot svg { width: 100%; height: 100%; }
.scale { position: absolute; left: 8px; top: 13px; display: flex; flex-direction: column; gap: 16px; color: #aaa; }
.editor { display: flex; white-space: pre; align-items: center; height: 20px; background: #1c1c1c; font: 8px/16px "DejaVu Sans Mono", monospace; color: #999; padding: 0 0 4px 12px; flex: none; }
.ln { width: 26px; color: #555; }
.y { color: #a9955e; } .r { color: #bd5148; } .b { color: #3c91c5; }
.graphtools { display: flex; gap: 17px; margin-top: 9px; padding-left: 239px; }
.graphtools div { display: flex; gap: 1px; }
.graphtools .icon { width: 16px; }
.graphtools svg { width: 12px; height: 12px; }
.zoomer { display: flex; align-items: center; gap: 4px; margin-top: auto; height: 10px; padding-left: 5px; flex: none; }
.zoomer svg { width: 11px; height: 6px; }
.zoomer .small { width: 7px; height: 4px; }
.zoomer input { appearance: none; width: 37px; height: 1px; background: #555; }
.zoomer input::-webkit-slider-thumb { appearance: none; width: 7px; height: 7px; border: 2px solid #aaa; background: #222; border-radius: 50%; }
.playhead { position: absolute; left: 116px; top: 5px; width: 1px; height: 168px; background: #3d6cb4; }
.playhead::before { content: ""; position: absolute; left: -4px; top: 8px; width: 9px; height: 10px; background: #2d83ee; clip-path: polygon(0 0, 100% 0, 100% 70%, 50% 100%, 0 70%); }
.edge { padding-top: 25px; display: flex; flex-direction: column; gap: 3px; align-items: end; }

.cursor { position: absolute; left: 596px; top: 519px; width: 9px; height: 13px; }
.subs { position: absolute; left: 0; right: 0; bottom: 24px; text-align: center; color: #fff; font: bold 23px/26px "Liberation Serif", "Noto Sans CJK SC", serif; text-shadow: -1px -1px #000, 1px -1px #000, -1px 1px #000, 1px 1px #000, 0 2px 1px #000; }
.subs p[lang="zh"] { font-size: 20px; font-family: "Noto Sans CJK SC", sans-serif; }
.subs span { font-size: 23px; font-family: "Liberation Serif", serif; }
.lil { position: absolute; right: 18px; bottom: 17px; display: flex; align-items: center; color: #c4c4c4; font: bold 19px/22px Lato, sans-serif; }
.lil span { background: #c4c4c4; color: #222; height: 18px; line-height: 17px; padding: 0 1px; margin: 0 5px 0 1px; border-radius: 1px; }
.lil em { font-style: normal; font-weight: 400; }
.brand { position: absolute; right: 6px; bottom: 18px; display: flex; align-items: end; color: #aaa; }
.brand > svg { width: 76px; height: 76px; }
.brand div { display: flex; flex-direction: column; align-items: end; text-shadow: 0 0 1px #222; }
.brand strong { font: bold 38px/34px "DejaVu Sans", sans-serif; }
.brand span { font: bold 27px/28px "Noto Sans CJK SC", sans-serif; margin-bottom: 11px; }
```
